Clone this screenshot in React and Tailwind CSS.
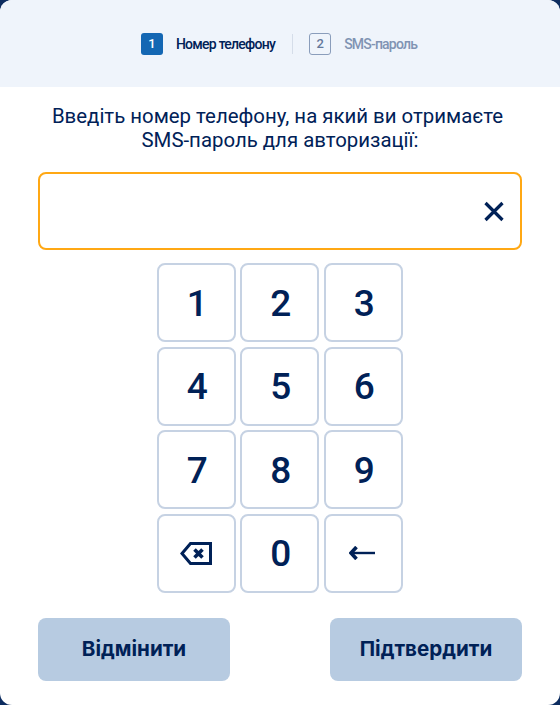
import React from 'react';

const KEYS = ['1', '2', '3', '4', '5', '6', '7', '8', '9', 'del', '0', 'back'];

const BackspaceIcon = () => (
  <svg width="32" height="23" viewBox="0 0 32 23" fill="none" className="mr-[1px]">
    <path d="M2 11.5L10.5 1.5H30.5V21.5H10.5L2 11.5Z" stroke="#002157" strokeWidth="3" />
    <path d="M14.5 7.5L22.5 15.5M22.5 7.5L14.5 15.5" stroke="#002157" strokeWidth="3.6" />
  </svg>
);

const ArrowIcon = () => (
  <svg width="26" height="14" viewBox="0 0 26 14" fill="none" className="mr-[3px]">
    <path d="M7.5 1L2 7L7.5 13" stroke="#002157" strokeWidth="3.6" />
    <path d="M3 7H26" stroke="#002157" strokeWidth="2.4" />
  </svg>
);

const Key = ({ value }) => (
  <button className="w-[79px] h-[79px] flex items-center justify-center bg-white border-2 border-[#c6d2e3] rounded-lg text-[37px] font-medium text-[#002157]">
    {value === 'del' ? <BackspaceIcon /> : value === 'back' ? <ArrowIcon /> : <span className="block pl-[2px] pt-[1px]">{value}</span>}
  </button>
);

export default function App() {
  return (
    <div className="w-[560px] h-[705px] bg-[#0d2d60] font-['Roboto',sans-serif]">
      <div className="w-full h-full bg-white rounded-xl overflow-hidden flex flex-col">
        <div className="h-[87px] bg-[#eff4fb] flex items-center justify-center pr-[2px]">
          <div className="w-[22px] h-[22px] rounded-[3px] bg-[#1467b3] text-white text-[13px] font-medium flex items-center justify-center">1</div>
          <span className="ml-[13px] text-sm font-medium text-[#002157] tracking-[-0.75px]">Номер телефону</span>
          <div className="w-px h-[20px] bg-[#d5dde9] ml-[17px] mr-4"></div>
          <div className="w-[22px] h-[22px] rounded-[3px] border border-[#8a9dbb] text-[#64789b] text-[13px] font-medium flex items-center justify-center">2</div>
          <span className="ml-[13px] text-sm font-medium text-[#8093b3] tracking-[-0.8px]">SMS-пароль</span>
        </div>
        <div className="flex-1 px-[38px] flex flex-col">
          <p className="mt-[18px] text-[20.4px] leading-[23.5px] text-center text-[#002157]">
            Введіть номер телефону, на який ви отримаєте{'\u00A0'}
            <br />
            SMS-пароль для авторизації:
          </p>
          <div className="mt-[20px] h-[78px] border-2 border-[#ffa814] rounded-lg flex items-center justify-end pr-[14px]">
            <svg width="24" height="24" viewBox="0 0 24 24" fill="none" className="mt-[2px]">
              <path d="M3.5 3L20.5 20M20.5 3L3.5 20" stroke="#002157" strokeWidth="3.2" />
            </svg>
          </div>
          <div className="mt-[13.3px] mr-[0.4px] grid grid-cols-[79px_79px_79px] gap-[4.5px] justify-center">
            {KEYS.map((k) => (
              <Key key={k} value={k} />
            ))}
          </div>
          <div className="mt-[25.2px] flex justify-between">
            <button className="w-[192px] h-[63px] rounded-lg bg-[#b7cbe1] text-[20.6px] font-bold text-[#002157] font-['Inter',sans-serif]">Відмінити</button>
            <button className="w-[192px] h-[63px] rounded-lg bg-[#b7cbe1] text-[20.6px] font-bold text-[#002157] font-['Inter',sans-serif]">Підтвердити</button>
          </div>
        </div>
      </div>
    </div>
  );
}
